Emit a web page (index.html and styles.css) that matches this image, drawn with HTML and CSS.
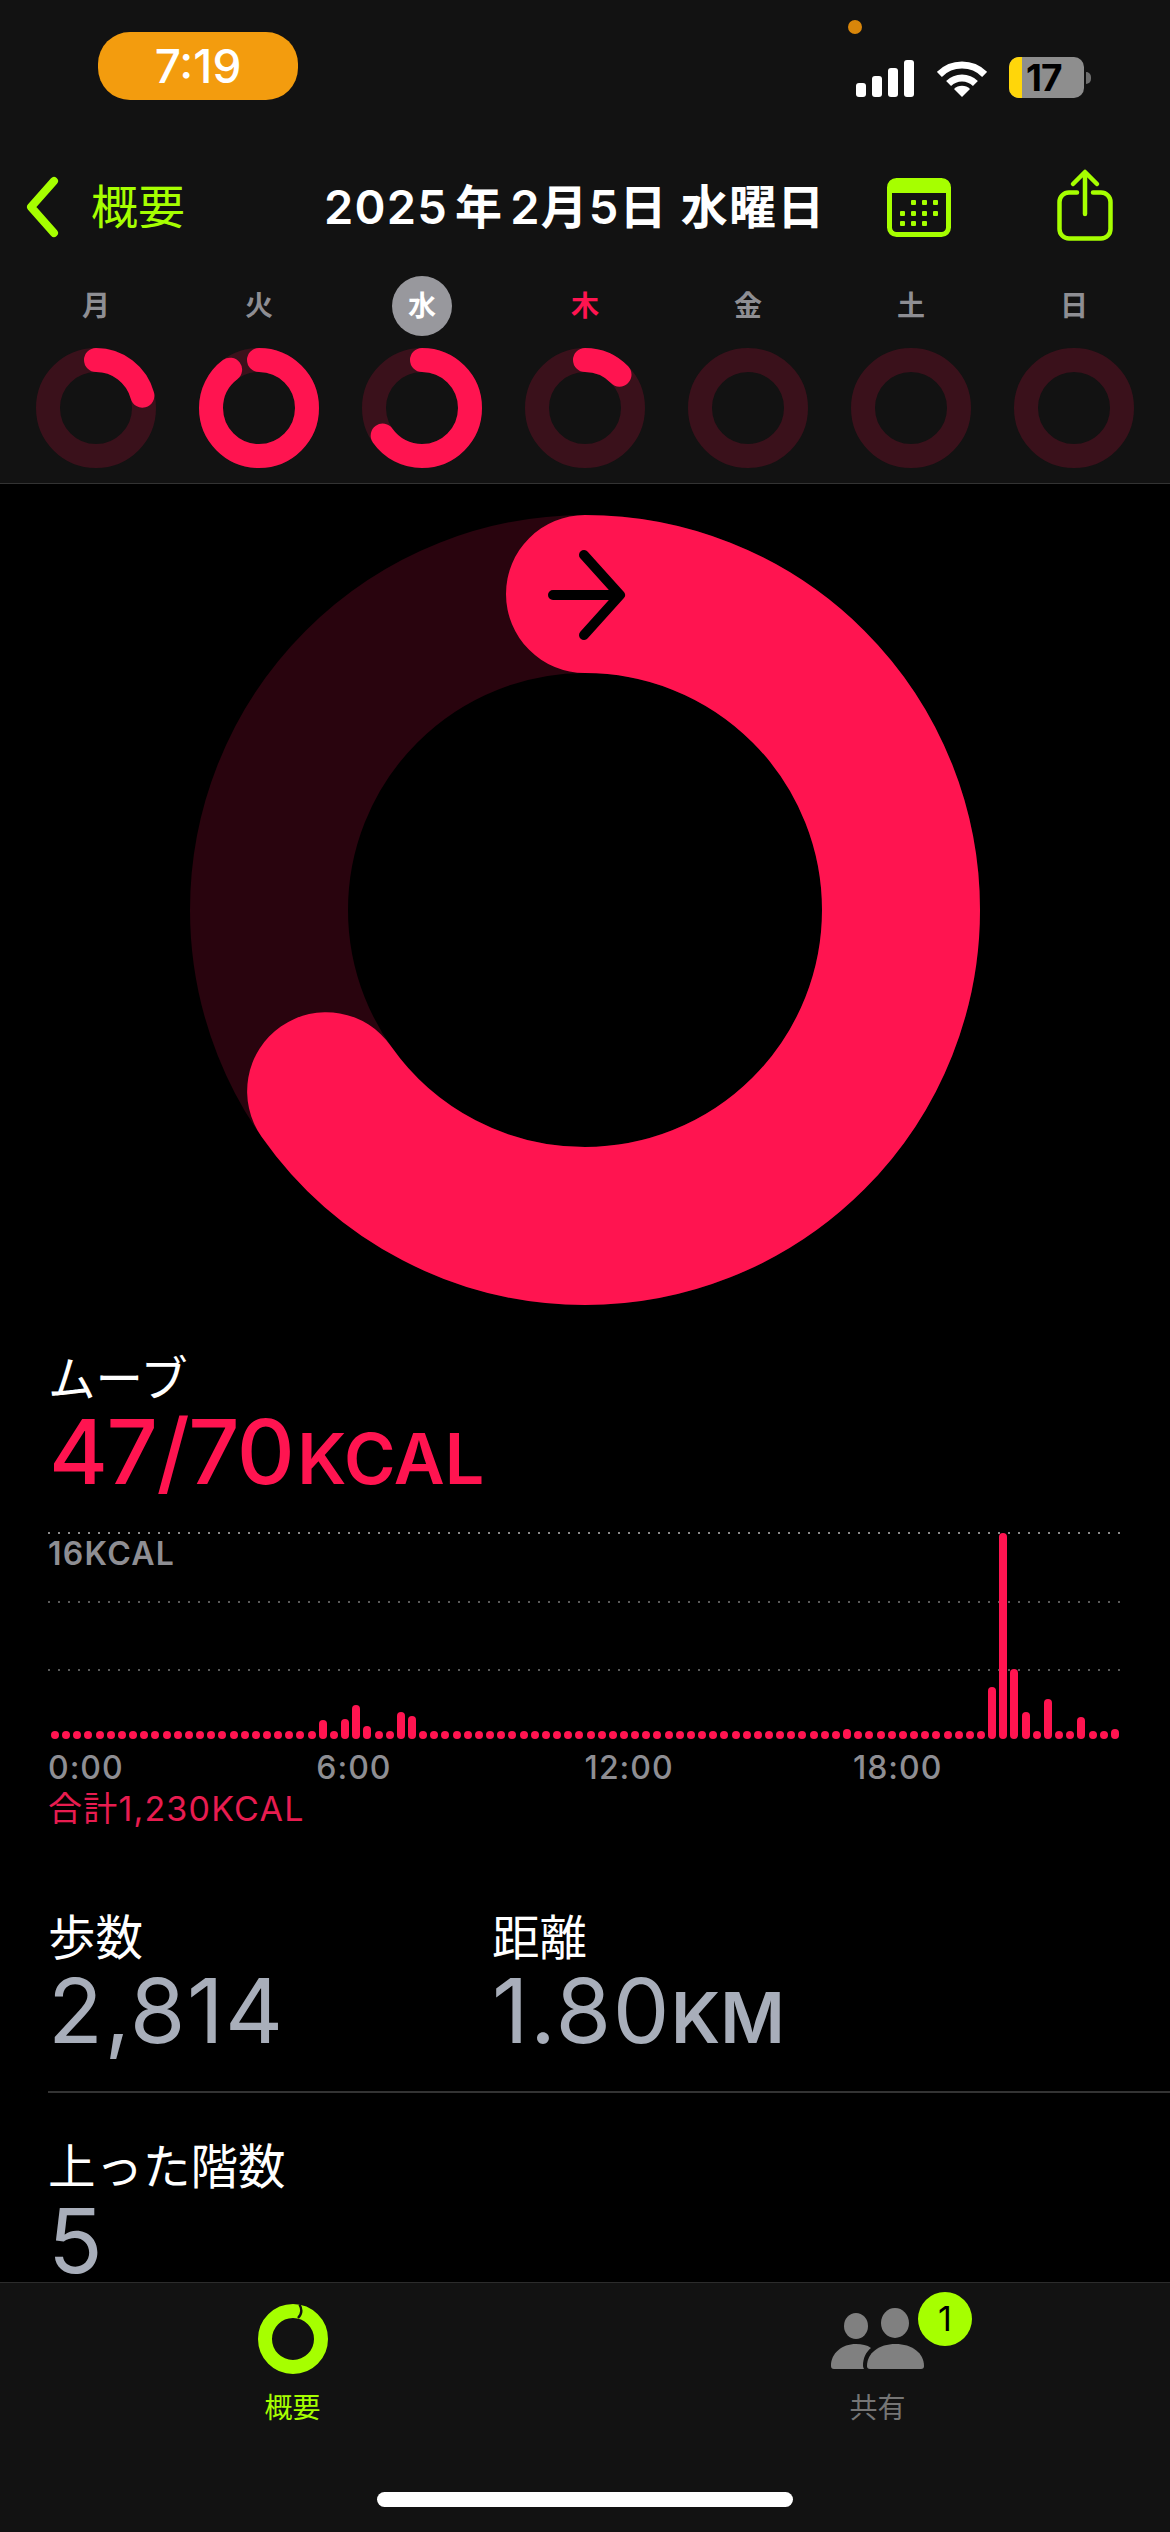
FILE: index.html
```html
<!DOCTYPE html>
<html lang="ja">
<head>
<meta charset="utf-8">
<title>アクティビティ</title>
<link rel="stylesheet" href="styles.css">
</head>
<body>
<div class="phone">
  <header class="top">
    <div class="status">
      <span class="rec-dot"></span>
      <div class="pill">7:19</div>
      <div class="status-icons">
        <div class="signal"><i class="s1"></i><i class="s2"></i><i class="s3"></i><i class="s4"></i></div>
        <svg class="wifi" viewBox="0 0 50 37" width="50" height="37" fill="none" stroke="#fff" stroke-width="7">
          <path d="M2.4 14.4A32 32 0 0 1 47.6 14.4"/>
          <path d="M11.6 23.6A19 19 0 0 1 38.4 23.6"/>
          <path d="M25 37L17 29A11.3 11.3 0 0 1 33 29Z" fill="#fff" stroke="none"/>
        </svg>
        <div class="battery"><span class="batt-fill"></span><span class="batt-num">17</span></div>
        <span class="batt-nub"></span>
      </div>
    </div>
    <nav class="nav">
      <svg class="back" viewBox="0 0 40 62" width="40" height="62" fill="none" stroke="#a6ff00" stroke-width="8" stroke-linecap="round" stroke-linejoin="round"><path d="M30 5L7 31L30 57"/></svg>
      <span class="back-label">概要</span>
      <h1 class="title">2025<span class="tg">年</span>2月5日 水曜日</h1>
      <svg class="cal" viewBox="0 0 64 59" width="64" height="59">
        <rect x="2.5" y="2.5" width="59" height="54" rx="7" fill="none" stroke="#a6ff00" stroke-width="5"/>
        <path d="M8 1H56A7 7 0 0 1 63 8V15H1V8A7 7 0 0 1 8 1Z" fill="#a6ff00"/>
        <g fill="#a6ff00">
          <rect x="24" y="22" width="5" height="5" rx="1"/><rect x="35" y="22" width="5" height="5" rx="1"/><rect x="46" y="22" width="5" height="5" rx="1"/>
          <rect x="13" y="33" width="5" height="5" rx="1"/><rect x="24" y="33" width="5" height="5" rx="1"/><rect x="35" y="33" width="5" height="5" rx="1"/><rect x="46" y="33" width="5" height="5" rx="1"/>
          <rect x="13" y="43" width="5" height="5" rx="1"/><rect x="24" y="43" width="5" height="5" rx="1"/><rect x="35" y="43" width="5" height="5" rx="1"/>
        </g>
      </svg>
      <svg class="share" viewBox="0 0 60 76" width="60" height="76" fill="none" stroke="#a6ff00" stroke-width="4.5" stroke-linecap="round" stroke-linejoin="round">
        <path d="M22 24.5H14a9.5 9.5 0 0 0-9.5 9.5V61a9.5 9.5 0 0 0 9.5 9.5H46a9.5 9.5 0 0 0 9.5-9.5V34a9.5 9.5 0 0 0-9.5-9.5H38"/>
        <path d="M30 5V46M18 16L30 4L42 16"/>
      </svg>
    </nav>
    <div class="week">
      <div class="day"><span class="dl">月</span>
        <svg class="mini" viewBox="0 0 122 122" width="122" height="122" fill="none" stroke-width="24"><circle class="mini-track" cx="61" cy="61" r="48"/><circle class="mini-arc" cx="61" cy="61" r="48" pathLength="360" stroke-dasharray="75 400" transform="rotate(-90 61 61)"/></svg></div>
      <div class="day"><span class="dl">火</span>
        <svg class="mini" viewBox="0 0 122 122" width="122" height="122" fill="none" stroke-width="24"><circle class="mini-track" cx="61" cy="61" r="48"/><circle class="mini-arc" cx="61" cy="61" r="48" pathLength="360" stroke-dasharray="323 400" transform="rotate(-90 61 61)"/></svg></div>
      <div class="day"><span class="dl dl-now">水</span>
        <svg class="mini" viewBox="0 0 122 122" width="122" height="122" fill="none" stroke-width="24"><circle class="mini-track" cx="61" cy="61" r="48"/><circle class="mini-arc" cx="61" cy="61" r="48" pathLength="360" stroke-dasharray="235 400" transform="rotate(-90 61 61)"/></svg></div>
      <div class="day"><span class="dl dl-today">木</span>
        <svg class="mini" viewBox="0 0 122 122" width="122" height="122" fill="none" stroke-width="24"><circle class="mini-track" cx="61" cy="61" r="48"/><circle class="mini-arc" cx="61" cy="61" r="48" pathLength="360" stroke-dasharray="46 400" transform="rotate(-90 61 61)"/></svg></div>
      <div class="day"><span class="dl">金</span>
        <svg class="mini" viewBox="0 0 122 122" width="122" height="122" fill="none" stroke-width="24"><circle class="mini-track" cx="61" cy="61" r="48"/></svg></div>
      <div class="day"><span class="dl">土</span>
        <svg class="mini" viewBox="0 0 122 122" width="122" height="122" fill="none" stroke-width="24"><circle class="mini-track" cx="61" cy="61" r="48"/></svg></div>
      <div class="day"><span class="dl">日</span>
        <svg class="mini" viewBox="0 0 122 122" width="122" height="122" fill="none" stroke-width="24"><circle class="mini-track" cx="61" cy="61" r="48"/></svg></div>
    </div>
  </header>

  <main class="main">
    <svg class="big-ring" viewBox="0 0 790 790" width="790" height="790" fill="none" stroke-width="158">
      <circle class="big-track" cx="395" cy="395" r="316"/>
      <circle class="big-arc" cx="395" cy="395" r="316" pathLength="360" stroke-dasharray="235 400" transform="rotate(-90 395 395)"/>
      <path d="M363 80H430M394 40L430 80L394 120" stroke="#000" stroke-width="10" stroke-linecap="round" stroke-linejoin="round"/>
    </svg>

    <section class="move">
      <div class="label">ムーブ</div>
      <div class="value value-move">47/70<span class="unit unit-kcal">KCAL</span></div>
    </section>

    <section class="chart-wrap">
      <div class="chart">
        <div class="grid-lines">
          <span class="gl gl-top"></span><span class="gl"></span><span class="gl"></span>
        </div>
        <span class="chart-max">16KCAL</span>
        <div class="bars">
          <i></i><i></i><i></i><i></i><i></i><i></i><i></i><i></i><i></i><i></i><i></i><i></i>
          <i></i><i></i><i></i><i></i><i></i><i></i><i></i><i></i><i></i><i></i><i></i><i></i>
          <i style="height:19px"></i><i></i><i style="height:20px"></i><i style="height:34px"></i><i style="height:13px"></i><i></i><i></i><i style="height:27px"></i><i style="height:23px"></i><i></i><i></i><i></i>
          <i></i><i></i><i></i><i></i><i></i><i></i><i></i><i></i><i></i><i></i><i></i><i></i>
          <i></i><i></i><i></i><i></i><i></i><i></i><i></i><i></i><i></i><i></i><i></i><i></i>
          <i></i><i></i><i></i><i></i><i></i><i></i><i></i><i></i><i></i><i></i><i></i><i style="height:10px"></i>
          <i></i><i></i><i></i><i></i><i></i><i></i><i></i><i></i><i></i><i></i><i></i><i></i>
          <i style="height:52px"></i><i style="height:206px"></i><i style="height:70px"></i><i style="height:27px"></i><i></i><i style="height:40px"></i><i></i><i></i><i style="height:22px"></i><i></i><i></i><i style="height:10px"></i>
        </div>
      </div>
      <div class="axis"><span>0:00</span><span>6:00</span><span>12:00</span><span>18:00</span></div>
      <div class="total">合計1,230KCAL</div>
    </section>

    <section class="stats">
      <div class="stat">
        <div class="label">歩数</div>
        <div class="value">2,814</div>
      </div>
      <div class="stat">
        <div class="label">距離</div>
        <div class="value">1.80<span class="unit">KM</span></div>
      </div>
    </section>
    <section class="floors">
      <div class="label">上った階数</div>
      <div class="value">5</div>
    </section>
  </main>

  <footer class="tabbar">
    <div class="tabs">
      <div class="tab tab-on">
        <svg class="tab-icon" viewBox="0 0 70 70" width="70" height="70" fill="none">
          <circle cx="35" cy="35" r="28" stroke="#a6ff00" stroke-width="14"/>
          <path d="M41.500 0.500C44 5 44 10 40 14" stroke="#121212" stroke-width="2.4"/>
        </svg>
        <span class="tab-label">概要</span>
      </div>
      <div class="tab">
        <div class="people">
          <svg viewBox="0 0 95 62" width="95" height="62">
            <ellipse cx="26" cy="18" rx="12" ry="13" fill="#808080"/>
            <ellipse cx="65" cy="15" rx="14" ry="15" fill="#808080"/>
            <path d="M1 58C1 45 12 36 26 36C32 36 37 37 41 40C36 44 33 50 33 58C33 59 33.500 60 34 61H4C2 61 1 60 1 58Z" fill="#808080"/>
            <path d="M37 58C37 45 49 36 65.500 36C82 36 94 45 94 58C94 60 93 61 91 61H40C38 61 37 60 37 58Z" fill="#808080"/>
          </svg>
          <span class="badge">1</span>
        </div>
        <span class="tab-label">共有</span>
      </div>
    </div>
    <div class="home"></div>
  </footer>
</div>
</body>
</html>
```

FILE: styles.css
```css
* { box-sizing: border-box; margin: 0; padding: 0; }
html, body { width: 1170px; height: 2532px; background: #000; overflow: hidden; }
body { font-family: Inter, "Noto Sans CJK JP", sans-serif; color: #fff; }
.phone { width: 1170px; height: 2532px; display: flex; flex-direction: column; overflow: hidden; }

/* header */
.top { height: 484px; background: #121212; border-bottom: 1px solid #333; flex: none; }
.status { height: 140px; position: relative; display: flex; align-items: flex-start; padding: 32px 79px 0 98px; }
.rec-dot { position: absolute; left: 848px; top: 20px; width: 14px; height: 14px; border-radius: 50%; background: #d9860a; }
.pill { width: 200px; height: 68px; border-radius: 32px; background: #f39c0e; font-size: 46px; font-weight: 500; line-height: 68px; text-align: center; color: #fff; }
.status-icons { margin-left: auto; margin-top: 25px; height: 41px; display: flex; align-items: center; }
.signal { display: flex; align-items: flex-end; gap: 6px; height: 37px; margin-top: 2px; }
.signal i { width: 10px; background: #fff; border-radius: 3px; display: block; }
.s1 { height: 14px; } .s2 { height: 21px; } .s3 { height: 29px; } .s4 { height: 37px; }
.wifi { margin-left: 23px; margin-top: 2px; }
.battery { margin-left: 22px; width: 75px; height: 41px; border-radius: 10px; background: #8e8e8e; display: flex; align-items: center; }
.batt-fill { width: 13px; height: 41px; background: #ffd60a; flex: none; border-radius: 10px 0 0 10px; }
.batt-num { margin-left: 4px; font-size: 37px; font-weight: 700; color: #000; line-height: 41px; letter-spacing: -1px; }
.batt-nub { width: 5px; height: 12px; margin-left: 2px; background: #6e6e6e; border-radius: 0 6px 6px 0; }

.nav { height: 134px; display: flex; align-items: center; padding-left: 24px; }
.back { flex: none; }
.back-label { margin-left: 27px; font-size: 47px; line-height: 54px; color: #a6ff00; }
.title { margin-left: 139px; width: 497px; font-size: 47px; font-weight: 600; line-height: 56px; white-space: nowrap; letter-spacing: 1.200px; }
.tg { margin: 0 7px; }
.cal { margin-left: 66px; flex: none; }
.share { margin-left: 104px; flex: none; margin-top: -2px; }

.week { display: grid; grid-template-columns: repeat(7, 163px); padding: 2px 0 0 14.500px; }
.day { display: flex; flex-direction: column; align-items: center; gap: 11px; }
.dl { width: 60px; height: 60px; border-radius: 50%; font-size: 28px; font-weight: 700; line-height: 60px; text-align: center; color: #8e8e93; }
.dl-now { background: #98989d; color: #fff; }
.dl-today { color: #ff1450; }
.mini-track { stroke: #3a111b; }
.mini-arc { stroke: #ff1450; stroke-linecap: round; }

/* main */
.main { flex: 1; min-height: 0; }
.big-ring { display: block; margin: 31px auto 0; }
.big-track { stroke: #29040e; }
.big-arc { stroke: #ff1450; stroke-linecap: round; }

.label { font-size: 47.500px; line-height: 46px; color: #fff; }
.value { font-size: 90px; font-weight: 400; line-height: 90px; color: #a8aeba; white-space: nowrap; letter-spacing: 1.500px; }
.value-move { color: #ff1450; letter-spacing: -1.500px; font-weight: 500; }
.unit { font-size: 70px; font-weight: 600; line-height: 0; letter-spacing: 0; }
.unit-kcal { margin-left: 4px; }

.move { padding: 51px 0 0 48px; }
.move .value { margin-top: 5px; padding-left: 1px; }

.chart-wrap { padding: 35px 50px 0 48px; }
.chart { height: 207px; position: relative; }
.grid-lines { display: flex; flex-direction: column; gap: 66.500px; }
.gl { display: block; height: 2px; background-image: linear-gradient(to right, #5a5a5a 2px, transparent 2px); background-size: 10px 2px; }
.gl-top { background-image: linear-gradient(to right, #8a8a8a 2px, transparent 2px); }
.chart-max { position: absolute; left: 0; top: 6px; font-size: 32px; font-weight: 600; line-height: 32px; letter-spacing: 1.300px; color: #8e8e93; }
.bars { position: absolute; left: 3px; right: 1px; bottom: 0; display: flex; justify-content: space-between; align-items: flex-end; }
.bars i { display: block; width: 8px; height: 8px; border-radius: 4px; background: #ff1450; }
.axis { display: grid; grid-template-columns: repeat(4, 268.300px); padding: 10px 0 0; font-size: 32px; font-weight: 500; line-height: 38px; letter-spacing: 1px; color: #8e8e93; }
.total { font-size: 34px; line-height: 40px; margin-top: 2px; letter-spacing: 1.200px; color: #e81c50; }

.stats { margin-top: 86px; padding: 0 0 35px 48px; display: grid; grid-template-columns: 444px 1fr; }
.stat .value { margin-top: 5px; }
.floors { margin-left: 48px; border-top: 2px solid #333; padding: 51px 0 0 0; }
.floors .value { margin-top: 11px; line-height: 80px; }

/* tab bar */
.tabbar { height: 250px; flex: none; background: #121212; border-top: 1px solid #2c2c2c; display: flex; flex-direction: column; align-items: center; position: relative; }
.tabs { width: 100%; height: 209px; display: grid; grid-template-columns: 585px 585px; }
.tab { display: flex; flex-direction: column; align-items: center; padding-top: 21px; color: #757575; }
.tab-on { color: #a6ff00; }
.tab-icon { display: block; }
.tab-label { font-size: 28px; line-height: 34px; margin-top: 17px; font-weight: 400; }
.people { width: 95px; height: 70px; position: relative; padding-top: 4px; }
.people svg { display: block; }
.badge { position: absolute; left: 88px; top: -12px; width: 54px; height: 54px; border-radius: 50%; background: #a6ff00; color: #000; font-size: 34px; line-height: 54px; text-align: center; }
.home { width: 416px; height: 15px; border-radius: 8px; background: #fff; }
```
